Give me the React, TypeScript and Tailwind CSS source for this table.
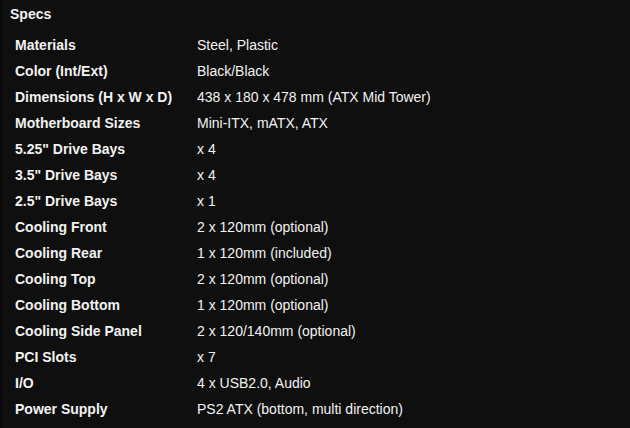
const specs: [string, string][] = [
  ['Materials', 'Steel, Plastic'],
  ['Color (Int/Ext)', 'Black/Black'],
  ['Dimensions (H x W x D)', '438 x 180 x 478 mm (ATX Mid Tower)'],
  ['Motherboard Sizes', 'Mini-ITX, mATX, ATX'],
  ['5.25" Drive Bays', 'x 4'],
  ['3.5" Drive Bays', 'x 4'],
  ['2.5" Drive Bays', 'x 1'],
  ['Cooling Front', '2 x 120mm (optional)'],
  ['Cooling Rear', '1 x 120mm (included)'],
  ['Cooling Top', '2 x 120mm (optional)'],
  ['Cooling Bottom', '1 x 120mm (optional)'],
  ['Cooling Side Panel', '2 x 120/140mm (optional)'],
  ['PCI Slots', 'x 7'],
  ['I/O', '4 x USB2.0, Audio'],
  ['Power Supply', 'PS2 ATX (bottom, multi direction)'],
]

export default function App() {
  return (
    <main className="min-h-[428px] w-[630px] bg-[#0f0f0f] border-l-[3px] border-[#0a0a0a] text-[14px] text-[#f2f2f2] font-[family-name:'Liberation_Sans',Arial,sans-serif]">
      <h2 className="pl-[7px] pt-[6px] font-bold leading-4">Specs</h2>
      <div className="mt-[10px] pl-[12px]">
        {specs.map(([label, value]) => (
          <div key={label} className="grid h-[26.07px] grid-cols-[182px_1fr] items-center">
            <span className="font-bold">{label}</span>
            <span>{value}</span>
          </div>
        ))}
      </div>
    </main>
  )
}
